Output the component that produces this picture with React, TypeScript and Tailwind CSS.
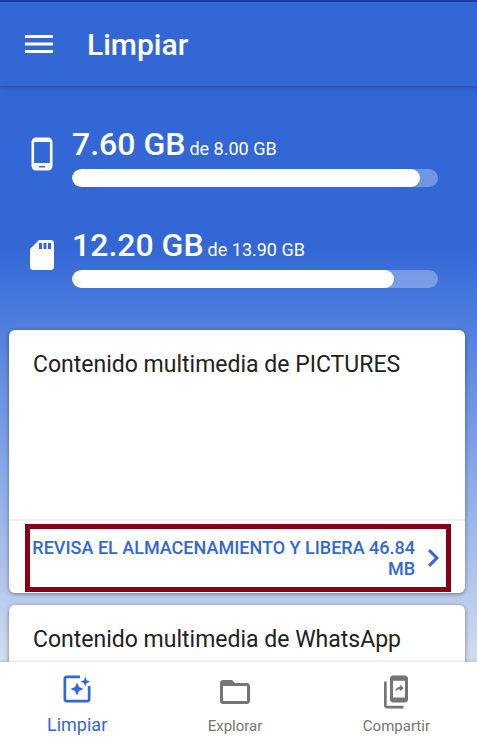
import type { ReactNode } from 'react';
import clsx from 'clsx';

type StorageRowProps = {
  label: string;
  used: string;
  total: string;
  percent: number;
  icon: ReactNode;
};

type NavItemProps = {
  label: string;
  icon: ReactNode;
  active?: boolean;
};

function MenuIcon() {
  return (
    <svg viewBox="0 0 28 18" className="h-[18px] w-7" fill="currentColor" aria-hidden="true">
      <path d="M0 0h28v3H0zM0 7.5h28v3H0zM0 15h28v3H0z" />
    </svg>
  );
}

function PhoneIcon() {
  return (
    <svg viewBox="0 0 24 24" className="size-9" fill="currentColor" aria-hidden="true">
      <path d="M16 1H8C6.34 1 5 2.34 5 4v16c0 1.66 1.34 3 3 3h8c1.66 0 3-1.34 3-3V4c0-1.66-1.34-3-3-3zm-2 20h-4v-1h4v1zm3.25-3H6.75V4h10.5v14z" />
    </svg>
  );
}

function SdCardIcon() {
  return (
    <svg viewBox="0 0 24 24" className="size-9" fill="currentColor" aria-hidden="true">
      <path d="M18 2h-8L4.02 8 4 20c0 1.1.9 2 2 2h12c1.1 0 2-.9 2-2V4c0-1.1-.9-2-2-2zm-6 6h-2V4h2v4zm3 0h-2V4h2v4zm3 0h-2V4h2v4z" />
    </svg>
  );
}

function ChevronIcon() {
  return (
    <svg viewBox="8.59 6 7.41 12" className="h-[18px] w-[11px] shrink-0" fill="currentColor" aria-hidden="true">
      <path d="M10 6L8.59 7.41 13.17 12l-4.58 4.59L10 18l6-6z" />
    </svg>
  );
}

function CleanIcon() {
  return (
    <svg viewBox="0 0 24 24" className="size-9" fill="currentColor" aria-hidden="true">
      <path d="M14 3H5c-1.1 0-2 .9-2 2v14c0 1.1.9 2 2 2h14c1.1 0 2-.9 2-2v-9h-1.8v9.2H4.8V4.8H14z" />
      <path d="M12 7.6l-1.300 3.100L7.600 12l3.100 1.300L12 16.400l1.300-3.100L16.400 12l-3.100-1.300z" />
      <path d="M17.500 3.900l-.9 2.300-2.300.9 2.300.9.9 2.300.9-2.300 2.300-.9-2.300-.9z" />
    </svg>
  );
}

function FolderIcon() {
  return (
    <svg viewBox="0 0 24 24" className="size-9" fill="currentColor" aria-hidden="true">
      <path d="M20 6h-8l-2-2H4c-1.1 0-1.99.9-1.99 2L2 18c0 1.1.9 2 2 2h16c1.1 0 2-.9 2-2V8c0-1.1-.9-2-2-2zm0 12H4V8h16v10z" />
    </svg>
  );
}

function ShareIcon() {
  return (
    <svg viewBox="0 0 24 24" className="size-9" fill="currentColor" aria-hidden="true">
      <path d="M18 1h-8C8.9 1 8 1.9 8 3v14c0 1.1.9 2 2 2h8c1.1 0 2-.9 2-2V3c0-1.1-.9-2-2-2zm0 14.7h-8V4.5h8v11.2z" />
      <path d="M4 5h1.8v16.2H17V23H6c-1.1 0-2-.9-2-2z" />
      <path d="M17.2 9.300l-2.400-2.100v1.200c-2.100.3-3 1.700-3.400 3.400.8-1 1.800-1.400 3.400-1.400v1.100z" />
    </svg>
  );
}

function StorageRow({ label, used, total, percent, icon }: StorageRowProps) {
  return (
    <section aria-label={label} className="flex items-start gap-3">
      <div className="pt-2">{icon}</div>
      <div className="flex-1">
        <p className="flex h-8 items-baseline gap-1 leading-8">
          <span className="text-[32px] font-medium">{used}</span>
          <span className="text-lg leading-8">de {total}</span>
        </p>
        <div className="mt-[9px] h-[18px] overflow-hidden rounded-full bg-white/30">
          <div className="h-full rounded-full bg-white" style={{ width: `${percent}%` }} />
        </div>
      </div>
    </section>
  );
}

function NavItem({ label, icon, active = false }: NavItemProps) {
  return (
    <a
      href="#"
      aria-current={active ? 'page' : undefined}
      className={clsx(
        'flex flex-col items-center',
        active ? 'gap-2 pt-[9px] text-lg leading-5 text-[#3367d6]' : 'gap-[6px] pt-3 text-[15px] leading-5 text-[#757575]',
      )}
    >
      {icon}
      {label}
    </a>
  );
}

export default function App() {
  return (
    <div className="flex h-screen flex-col overflow-hidden bg-[#3367d6] font-['Roboto',sans-serif]">
      <header className="z-10 flex h-[86px] shrink-0 items-center gap-[34px] border-t-2 border-[#1c3aa9] bg-[#3367d6] px-[25px] text-white shadow-[0_1px_5px_rgba(0,0,0,0.3)]">
        <button type="button" aria-label="Abrir menú">
          <MenuIcon />
        </button>
        <h1 className="text-[30px] font-medium">Limpiar</h1>
      </header>

      <main className="min-h-0 flex-1 overflow-hidden bg-linear-to-b from-[#3367d6] from-28% to-[#d2dcf0]">
        <div className="flex flex-col gap-[42px] pt-[42px] pr-[39px] pb-[42px] pl-6 text-white">
          <StorageRow label="Almacenamiento interno" used="7.60 GB" total="8.00 GB" percent={95} icon={<PhoneIcon />} />
          <StorageRow label="Tarjeta SD" used="12.20 GB" total="13.90 GB" percent={88} icon={<SdCardIcon />} />
        </div>

        <div className="flex flex-col gap-3 pr-3 pl-[9px] text-[#212121]">
          <article className="rounded-md bg-white pb-px shadow-[0_1px_4px_rgba(0,0,0,0.4)]">
            <h2 className="h-[189px] px-6 pt-[21px] text-[23px] leading-7">Contenido multimedia de PICTURES</h2>
            <div className="border-t-2 border-[#f0f0f0] pt-[3px] pr-[14px] pl-4">
              <button
                type="button"
                className="flex w-full items-center gap-[13px] border-5 border-[#880015] py-2 pr-[7px] text-right text-lg leading-[21px] font-medium text-[#3367d6]"
              >
                <span className="flex-1">REVISA EL ALMACENAMIENTO Y LIBERA 46.84 MB</span>
                <ChevronIcon />
              </button>
            </div>
          </article>
          <article className="rounded-md bg-white shadow-[0_1px_4px_rgba(0,0,0,0.4)]">
            <h2 className="h-[189px] px-6 pt-[21px] text-[23px] leading-7">Contenido multimedia de WhatsApp</h2>
          </article>
        </div>
      </main>

      <nav className="z-10 flex h-[82px] shrink-0 justify-between bg-white px-[47px] shadow-[0_-1px_3px_rgba(0,0,0,0.12)]">
        <NavItem label="Limpiar" icon={<CleanIcon />} active />
        <NavItem label="Explorar" icon={<FolderIcon />} />
        <NavItem label="Compartir" icon={<ShareIcon />} />
      </nav>
    </div>
  );
}
